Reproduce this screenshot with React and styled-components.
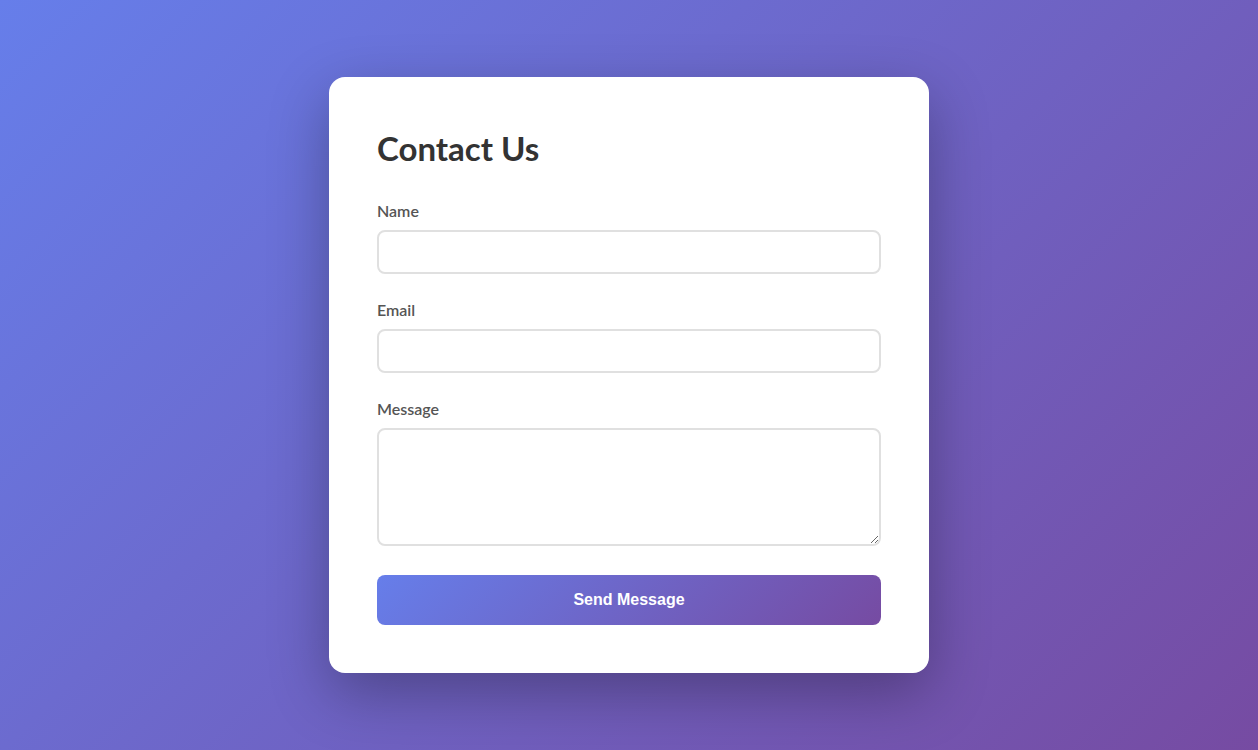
import React from "react";
import styled, { createGlobalStyle } from "styled-components";

const Global = createGlobalStyle`
  * { box-sizing: border-box; }
  html, body { margin: 0; padding: 0; }
  body {
    font-family: "Lato", "Open Sans", sans-serif;
    background: linear-gradient(135deg, #667eea 0%, #764ba2 100%);
    min-height: 100vh;
  }
`;

const Page = styled.div`
  min-height: 100vh;
  display: flex;
  align-items: center;
  justify-content: center;
  padding: 20px;
`;

const Card = styled.div`
  width: 600px;
  background: #fff;
  border-radius: 16px;
  padding: 48px;
  box-shadow: 0 20px 60px rgba(0, 0, 0, 0.3);
`;

const Title = styled.h1`
  margin: 0 0 28px;
  font-size: 33px;
  line-height: 47px;
  font-weight: 700;
  color: #333;
`;

const Field = styled.div`
  margin-bottom: ${(p) => (p.$last ? "0" : "25px")};
`;

const Label = styled.label`
  display: block;
  margin-bottom: 8px;
  font-size: 16px;
  line-height: 22px;
  font-weight: 600;
  color: #555;
`;

const Input = styled.input`
  display: block;
  width: 100%;
  height: 44px;
  padding: 12px;
  border: 2px solid #e0e0e0;
  border-radius: 8px;
  font-size: 16px;
  font-family: inherit;
  outline: none;
`;

const TextArea = styled.textarea`
  display: block;
  width: 100%;
  height: 118px;
  padding: 12px;
  border: 2px solid #e0e0e0;
  border-radius: 8px;
  font-size: 16px;
  font-family: inherit;
  outline: none;
  resize: vertical;
`;

const Button = styled.button`
  display: block;
  width: 100%;
  height: 50px;
  margin-top: 29px;
  border: none;
  border-radius: 8px;
  background: linear-gradient(135deg, #667eea 0%, #764ba2 100%);
  color: #fff;
  font-family: "Liberation Sans", Arial, sans-serif;
  font-size: 16px;
  font-weight: 700;
  cursor: pointer;
`;

export default function App() {
  return (
    <>
      <Global />
      <Page>
        <Card>
          <Title>Contact Us</Title>
          <Field>
            <Label htmlFor="name">Name</Label>
            <Input id="name" type="text" />
          </Field>
          <Field>
            <Label htmlFor="email">Email</Label>
            <Input id="email" type="email" />
          </Field>
          <Field $last>
            <Label htmlFor="message">Message</Label>
            <TextArea id="message" />
          </Field>
          <Button type="submit">Send Message</Button>
        </Card>
      </Page>
    </>
  );
}
